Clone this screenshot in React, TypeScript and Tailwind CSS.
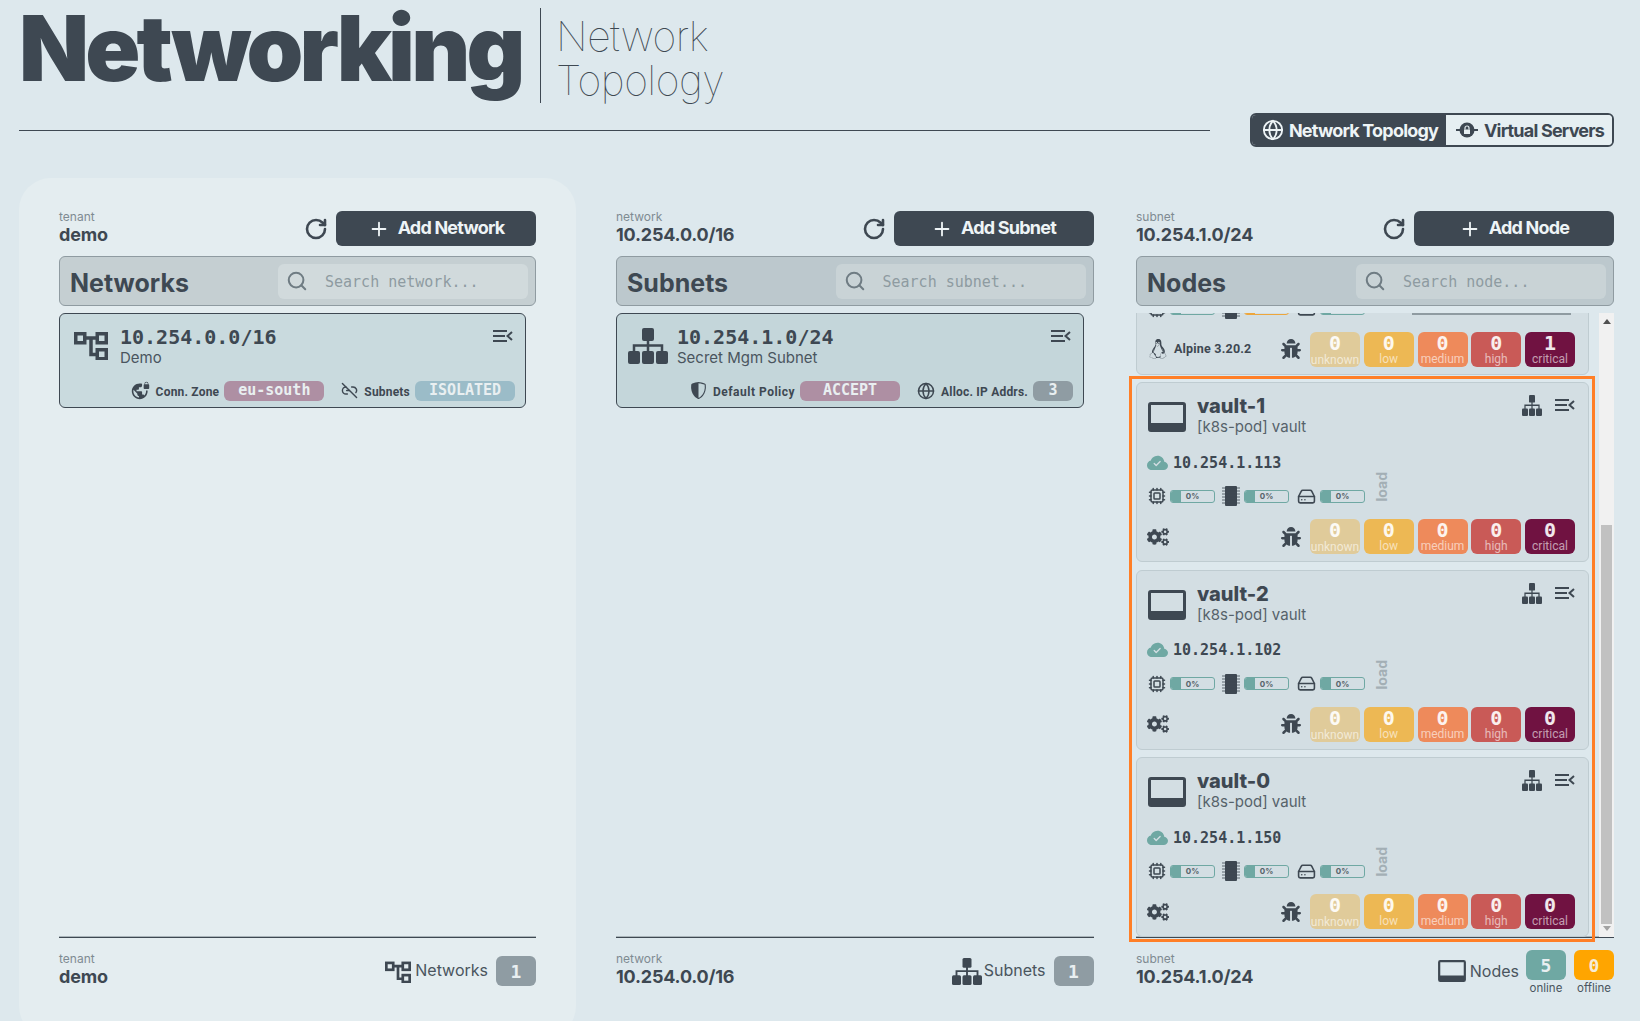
import React from 'react';
import { Cpu, Globe, HardDrive, Plus, RotateCw, Search, Link2Off } from 'lucide-react';
import { BsCloudCheckFill, BsShieldShaded } from 'react-icons/bs';
import { FaBug, FaCogs, FaLinux } from 'react-icons/fa';
import { MdVpnLock } from 'react-icons/md';

const MONO = "font-['DejaVu_Sans_Mono',monospace]";

function MenuIcon({ className }: { className?: string }) {
  return (
    <svg viewBox="0 0 20 14" className={className} fill="none" stroke="currentColor" strokeWidth="2">
      <path d="M0 2h14M0 7h12M0 12h14M19 3l-4.500 4 4.500 4" />
    </svg>
  );
}

function NetworkIcon({ className }: { className?: string }) {
  return (
    <svg viewBox="0 0 34 30" className={className} fill="none" stroke="currentColor" strokeWidth="3.500">
      <rect x="1.750" y="3.750" width="9" height="9" />
      <rect x="23.250" y="3.750" width="9" height="9" />
      <rect x="23.250" y="19.750" width="9" height="9" />
      <path d="M10 8h14M17 8v16.500h7" />
    </svg>
  );
}

function SitemapIcon({ className }: { className?: string }) {
  return (
    <svg viewBox="0 0 40 36" preserveAspectRatio="none" className={className} fill="currentColor">
      <rect x="14" y="0" width="12" height="13" rx="2" />
      <rect x="0" y="23" width="12" height="13" rx="2" />
      <rect x="14" y="23" width="12" height="13" rx="2" />
      <rect x="28" y="23" width="12" height="13" rx="2" />
      <path d="M6 24v-6.500h28V24M20 12v12" fill="none" stroke="currentColor" strokeWidth="2.500" />
    </svg>
  );
}

function MonitorIcon({ className }: { className?: string }) {
  return (
    <svg viewBox="0 0 38 30" className={className} fill="currentColor">
      <path fillRule="evenodd" d="M3 0h32a3 3 0 0 1 3 3v24a3 3 0 0 1-3 3H3a3 3 0 0 1-3-3V3a3 3 0 0 1 3-3zm0 3v18h32V3z" />
    </svg>
  );
}

function MemoryIcon({ className }: { className?: string }) {
  return (
    <svg viewBox="0 0 18 20" className={className} fill="currentColor">
      <rect x="3" y="0" width="12" height="20" rx="1" />
      <path d="M0 2h18M0 5h18M0 8h18M0 11h18M0 14h18M0 17h18" stroke="currentColor" strokeWidth="0.800" />
    </svg>
  );
}

function VirtualServerIcon({ className }: { className?: string }) {
  return (
    <svg viewBox="0 0 22 16" className={className} fill="currentColor">
      <path d="M0 7h22v2H0z" />
      <circle cx="11" cy="8" r="7.500" />
      <path d="M8 7.500h6v4.500H8z" fill="#e6eff2" />
      <path d="M9 7.500V6a2 2 0 0 1 4 0v1.500" fill="none" stroke="#e6eff2" strokeWidth="1.200" />
    </svg>
  );
}

function Crumb({ label, value }: { label: string; value: string }) {
  return (
    <div>
      <div className="text-[12px] leading-4 text-[#7f8b92]">{label}</div>
      <div className="text-[18px] leading-[20px] font-bold tracking-[-0.2px] text-[#3e4852]">{value}</div>
    </div>
  );
}

function ColumnHead({ label, value, action, title, search, titleBg, boxBg }: {
  label: string; value: string; action: string; title: string; search: string; titleBg: string; boxBg: string;
}) {
  return (
    <>
      <div className="flex items-start justify-between h-[35px]">
        <div className="-mt-[2px]"><Crumb label={label} value={value} /></div>
        <div className="flex items-center gap-[8px]">
          <RotateCw size={24} strokeWidth={2.6} className="text-[#3e4852]" />
          <button className="w-[200px] h-[35px] pb-[2px] bg-[#3e4852] rounded-md text-[#eef4f6] text-[18px] font-bold tracking-[-0.8px] flex items-center justify-center gap-[8px]">
            <Plus size={22} strokeWidth={2} className="mt-[2px]" />
            {action}
          </button>
        </div>
      </div>
      <div className={`mt-[10px] h-[50px] rounded-md border border-[#8f9ba1] flex items-center justify-between pl-[10px] pr-[7px] ${titleBg}`}>
        <div className="text-[25px] font-bold text-[#3e4852] mt-[5px]">{title}</div>
        <div className={`w-[250px] h-[35px] rounded-md flex items-center pl-[8px] ${boxBg}`}>
          <Search size={22} strokeWidth={2.2} className="text-[#6f7c83]" />
          <input
            readOnly
            placeholder={search}
            className={`ml-[17px] mt-[3px] w-[200px] bg-transparent text-[15px] outline-none placeholder:text-[#8e9ba1] ${MONO}`}
          />
        </div>
      </div>
    </>
  );
}

function Pill({ text, color, width = 'w-[100px]' }: { text: string; color: string; width?: string }) {
  return (
    <div className={`h-[20px] rounded-md flex items-center justify-center text-[15px] font-bold text-[#e9eff1] ${MONO} ${width} ${color}`}>
      {text}
    </div>
  );
}

function ChipLabel({ icon, text, spacing = 'tracking-[0.2px]' }: { icon: React.ReactNode; text: string; spacing?: string }) {
  return (
    <div className="flex items-center gap-[6px] mr-[5px] ml-[17px]">
      {icon}
      <span className={`text-[12px] font-bold font-['Roboto',sans-serif] text-[#3e4852] mt-[3px] ${spacing}`}>{text}</span>
    </div>
  );
}

function ListCard({ icon, title, sub, bg, children }: {
  icon: React.ReactNode; title: string; sub: string; bg: string; children: React.ReactNode;
}) {
  return (
    <div className={`h-[95px] border border-[#3e4852] rounded-md pt-[12px] pl-[10px] pr-[12px] ${bg}`}>
      <div className="flex items-start h-[42px]">
        <div className="w-[48px] shrink-0 -ml-[3px] flex justify-center mt-[4px]">{icon}</div>
        <div className="flex-1 ml-[5px]">
          <div className={`text-[20px] leading-[22px] font-bold text-[#3e4852] ${MONO}`}>{title}</div>
          <div className="text-[15px] leading-[20px] text-[#4a555e]">{sub}</div>
        </div>
        <MenuIcon className="w-[20px] h-[14px] text-[#3e4852] mt-[3px]" />
      </div>
      <div className="flex items-center justify-end mt-[12px] -mr-[2px]">{children}</div>
    </div>
  );
}

function LoadBar({ tone = 'teal' }: { tone?: 'teal' | 'orange' }) {
  const border = tone === 'teal' ? 'border-[#6fa8a3]' : 'border-[#eda63c]';
  const fill = tone === 'teal' ? 'bg-[#6fa8a3]' : 'bg-[#eda63c]';
  return (
    <div className={`relative w-[45px] h-[13px] border rounded-[3px] overflow-hidden ${border}`}>
      <div className={`w-[10px] h-full ${fill}`} />
      <div className="absolute inset-0 flex items-center justify-center text-[8px] font-bold text-[#56626a]">0%</div>
    </div>
  );
}

const SEVERITIES = [
  { key: 'unknown', bg: 'bg-[#e0cb9a]', label: 'mt-[1px]' },
  { key: 'low', bg: 'bg-[#edb854]', label: '' },
  { key: 'medium', bg: 'bg-[#ee8a5b]', label: '' },
  { key: 'high', bg: 'bg-[#c95a57]', label: '' },
  { key: 'critical', bg: 'bg-[#701241]', label: '' },
];

function NodeCard({ name, sub, ip, os, critical = 0, partial }: {
  name?: string; sub?: string; ip?: string; os?: string; critical?: number; partial?: boolean;
}) {
  return (
    <div className="shrink-0 h-[180px] bg-[#d3dee3] border border-[#bfccd1] rounded-md px-[10px]">
      <div className="h-[44px] mt-[11px] flex items-start">
        {name && (
          <>
            <MonitorIcon className="w-[38px] h-[30px] text-[#3e4852] mt-[8px] ml-[1px]" />
            <div className="ml-[11px] flex-1">
              <div className="text-[20px] leading-[24px] font-extrabold text-[#3e4852]">{name}</div>
              <div className="text-[15px] leading-[19px] -mt-px text-[#56626a]">{sub}</div>
            </div>
            <SitemapIcon className="w-[20px] h-[21px] text-[#3e4852] mr-[13px] mt-[1px]" />
            <MenuIcon className="w-[20px] h-[14px] text-[#3e4852] mt-[4px] mr-[3px]" />
          </>
        )}
      </div>
      <div className="h-[22px] mt-[14px] flex items-center">
        {ip && (
          <>
            <BsCloudCheckFill size={21} className="text-[#6fa8a3]" />
            <span className={`ml-[5px] text-[15px] font-bold text-[#3e4852] ${MONO}`}>{ip}</span>
          </>
        )}
      </div>
      <div className="h-[24px] mt-[10px] flex items-center">
        <Cpu size={18} className="text-[#3e4852] ml-[1px]" />
        <div className="ml-[4px]"><LoadBar /></div>
        <MemoryIcon className="ml-[7px] w-[18px] h-[20px] text-[#3e4852]" />
        <div className="ml-[4px]"><LoadBar tone={partial ? 'orange' : 'teal'} /></div>
        <HardDrive size={19} className="ml-[8px] text-[#3e4852]" />
        <div className="ml-[4px]"><LoadBar /></div>
        {partial ? (
          <div className="ml-[47px] w-[159px] h-[13px] bg-[#8f9ba1]" />
        ) : (
          <div className="ml-[10px] -translate-y-[9px] rotate-180 [writing-mode:vertical-rl] text-[14px] leading-[14px] font-bold text-[#a3afb5]">load</div>
        )}
      </div>
      <div className="h-[35px] mt-[11px] flex items-center">
        {os ? (
          <div className="flex items-center">
            <FaLinux size={20} className="text-[#3e4852] ml-[1px]" />
            <span className="ml-[6px] text-[12.500px] font-bold tracking-[0.2px] font-['Roboto',sans-serif] text-[#3e4852]">{os}</span>
          </div>
        ) : (
          <FaCogs size={22} className="text-[#3e4852]" />
        )}
        <div className="ml-auto mr-[3px] flex items-center gap-[3.750px]">
          <FaBug size={20} className="text-[#3e4852] mr-[5px]" />
          {SEVERITIES.map((s) => (
            <div key={s.key} className={`w-[50px] h-[35px] rounded-md flex flex-col items-center pt-[1px] ${s.bg}`}>
              <div className={`text-[20px] leading-[20px] font-bold text-white/90 ${MONO}`}>{s.key === 'critical' ? critical : 0}</div>
              <div className={`text-[12px] leading-[13px] font-['Roboto',sans-serif] text-white/60 ${s.label}`}>{s.key}</div>
            </div>
          ))}
        </div>
      </div>
    </div>
  );
}

function Scrollbar() {
  return (
    <div className="absolute right-0 top-0 w-[15px] h-[624px] bg-[#f1f1f1] flex flex-col items-center justify-between">
      <div className="mt-[6px] w-0 h-0 border-x-[4px] border-x-transparent border-b-[5px] border-b-[#505050]" />
      <div className="w-[11px] h-[399px] mt-auto mb-[2px] bg-[#c1c1c1]" />
      <div className="mb-[6px] w-0 h-0 border-x-[4px] border-x-transparent border-t-[5px] border-t-[#a3a3a3]" />
    </div>
  );
}

function Footer({ label, value, children }: { label: string; value: string; children: React.ReactNode }) {
  return (
    <div className="h-[84px] border-t border-[#3e4852] shadow-[0_-1px_0_#aab5ba] pt-[13px] flex items-start justify-between">
      <Crumb label={label} value={value} />
      {children}
    </div>
  );
}

function CountBadge({ n }: { n: number }) {
  return (
    <div className={`w-[40px] h-[30px] rounded-md bg-[#8f9ca3] flex items-center justify-center text-[18px] font-bold text-[#e9eff1] ${MONO}`}>{n}</div>
  );
}

export default function App() {
  return (
    <div className="h-[1021px] overflow-hidden bg-[#dde8ed] pl-[19px] pr-[25px] font-['Inter',sans-serif] text-[#3e4852]">
      <header className="h-[147px] flex items-start">
        <div className="w-[1191px] h-[131px] border-b border-[#3e4852] flex items-start">
          <h1 className="w-[503px] whitespace-nowrap text-[91px] leading-[97px] font-black text-[#3e4852] tracking-[-3.800px]">Networking</h1>
          <div className="ml-[18px] mt-[8px] h-[95px] border-l border-[#3e4852] pl-[15px] pt-[6px] text-[41px] leading-[44px] tracking-[-0.5px] font-thin text-[#3e4852]">
            <div>Network</div>
            <div>Topology</div>
          </div>
        </div>
        <div className="ml-[40px] mt-[113px] h-[34px] w-[364px] border-2 border-[#3e4852] rounded-md overflow-hidden flex text-[18px] font-bold tracking-[-0.8px]">
          <div className="w-[194px] bg-[#3e4852] text-[#eef4f6] flex items-center justify-center gap-[5px]">
            <Globe size={22} strokeWidth={2} className="ml-[2px]" />
            Network Topology
          </div>
          <div className="flex-1 bg-[#e6eff2] flex items-center justify-center gap-[6px]">
            <VirtualServerIcon className="w-[22px] h-[16px] ml-[2px]" />
            Virtual Servers
          </div>
        </div>
      </header>

      <main className="mt-[31px] flex items-start">
        <section className="w-[557px] h-[860px] bg-[#e4edf0] rounded-[32px] px-[40px] pt-[33px]">
          <ColumnHead label="tenant" value="demo" action="Add Network" title="Networks" search="Search network..." titleBg="bg-[#c5cfd2]" boxBg="bg-[#d1dadc]" />
          <div className="mt-[7px] h-[624px] pr-[10px]">
            <ListCard icon={<NetworkIcon className="w-[34px] h-[30px] text-[#3e4852]" />} title="10.254.0.0/16" sub="Demo" bg="bg-[#c9dade]">
              <ChipLabel icon={<MdVpnLock size={19} className="text-[#3e4852]" />} text="Conn. Zone" />
              <Pill text="eu-south" color="bg-[#ae8fa3]" />
              <ChipLabel icon={<Link2Off size={17} className="text-[#3e4852]" />} text="Subnets" />
              <Pill text="ISOLATED" color="bg-[#9bbcc8]" />
            </ListCard>
          </div>
          <Footer label="tenant" value="demo">
            <div className="flex items-center mt-[5px] h-[30px]">
              <NetworkIcon className="w-[26px] h-[23px] text-[#3e4852]" />
              <span className="ml-[4px] mr-[8px] -mt-[2px] text-[16px] text-[#4a555e]">Networks</span>
              <CountBadge n={1} />
            </div>
          </Footer>
        </section>

        <section className="ml-[40px] w-[477.500px] pt-[33px]">
          <ColumnHead label="network" value="10.254.0.0/16" action="Add Subnet" title="Subnets" search="Search subnet..." titleBg="bg-[#bcc8cd]" boxBg="bg-[#c9d3d6]" />
          <div className="mt-[7px] h-[624px] pr-[9.500px]">
            <ListCard icon={<SitemapIcon className="w-[40px] h-[36px] text-[#3e4852] -mt-[2px]" />} title="10.254.1.0/24" sub="Secret Mgm Subnet" bg="bg-[#c4d6da]">
              <ChipLabel icon={<BsShieldShaded size={17} className="text-[#3e4852]" />} text="Default Policy" spacing="tracking-[0.5px]" />
              <Pill text="ACCEPT" color="bg-[#ae8fa3]" />
              <ChipLabel icon={<Globe size={18} className="text-[#3e4852]" />} text="Alloc. IP Addrs." />
              <Pill text="3" color="bg-[#8f9ca3]" width="w-[40px]" />
            </ListCard>
          </div>
          <Footer label="network" value="10.254.0.0/16">
            <div className="flex items-center mt-[5px] h-[30px]">
              <SitemapIcon className="w-[30px] h-[27px] text-[#3e4852]" />
              <span className="ml-[2px] mr-[8px] -mt-[2px] text-[16px] text-[#4a555e]">Subnets</span>
              <CountBadge n={1} />
            </div>
          </Footer>
        </section>

        <section className="ml-[42.500px] w-[478px] pt-[33px]">
          <ColumnHead label="subnet" value="10.254.1.0/24" action="Add Node" title="Nodes" search="Search node..." titleBg="bg-[#bcc8cd]" boxBg="bg-[#c9d3d6]" />
          <div className="relative mt-[7px] h-[624px]">
            <div className="w-[453px] h-[624px] overflow-hidden flex flex-col justify-end gap-[7.500px]">
              <NodeCard os="Alpine 3.20.2" critical={1} partial />
              <NodeCard name="vault-1" sub="[k8s-pod] vault" ip="10.254.1.113" />
              <NodeCard name="vault-2" sub="[k8s-pod] vault" ip="10.254.1.102" />
              <NodeCard name="vault-0" sub="[k8s-pod] vault" ip="10.254.1.150" />
            </div>
            <Scrollbar />
            <div className="absolute left-[-7px] top-[63px] w-[466px] h-[566px] border-[3px] border-[#ff7f27]" />
          </div>
          <Footer label="subnet" value="10.254.1.0/24">
            <div className="flex items-start">
              <div className="flex items-center h-[30px] mt-[5px]">
                <MonitorIcon className="w-[28px] h-[22px] text-[#3e4852]" />
                <span className="ml-[4px] mr-[7px] text-[16px] text-[#4a555e]">Nodes</span>
              </div>
              <div className="flex gap-[8px] -mt-px">
                <div className="w-[40px] text-center">
                  <div className={`h-[30px] rounded-md bg-[#6fa8a3] flex items-center justify-center text-[18px] font-bold text-[#e9eff1] ${MONO}`}>5</div>
                  <div className="text-[11.500px] leading-[16px] text-[#4a555e]">online</div>
                </div>
                <div className="w-[40px] text-center">
                  <div className={`h-[30px] rounded-md bg-[#ffa500] flex items-center justify-center text-[18px] font-bold text-[#f5ecd8] ${MONO}`}>0</div>
                  <div className="text-[11.500px] leading-[16px] text-[#4a555e]">offline</div>
                </div>
              </div>
            </div>
          </Footer>
        </section>
      </main>
    </div>
  );
}
